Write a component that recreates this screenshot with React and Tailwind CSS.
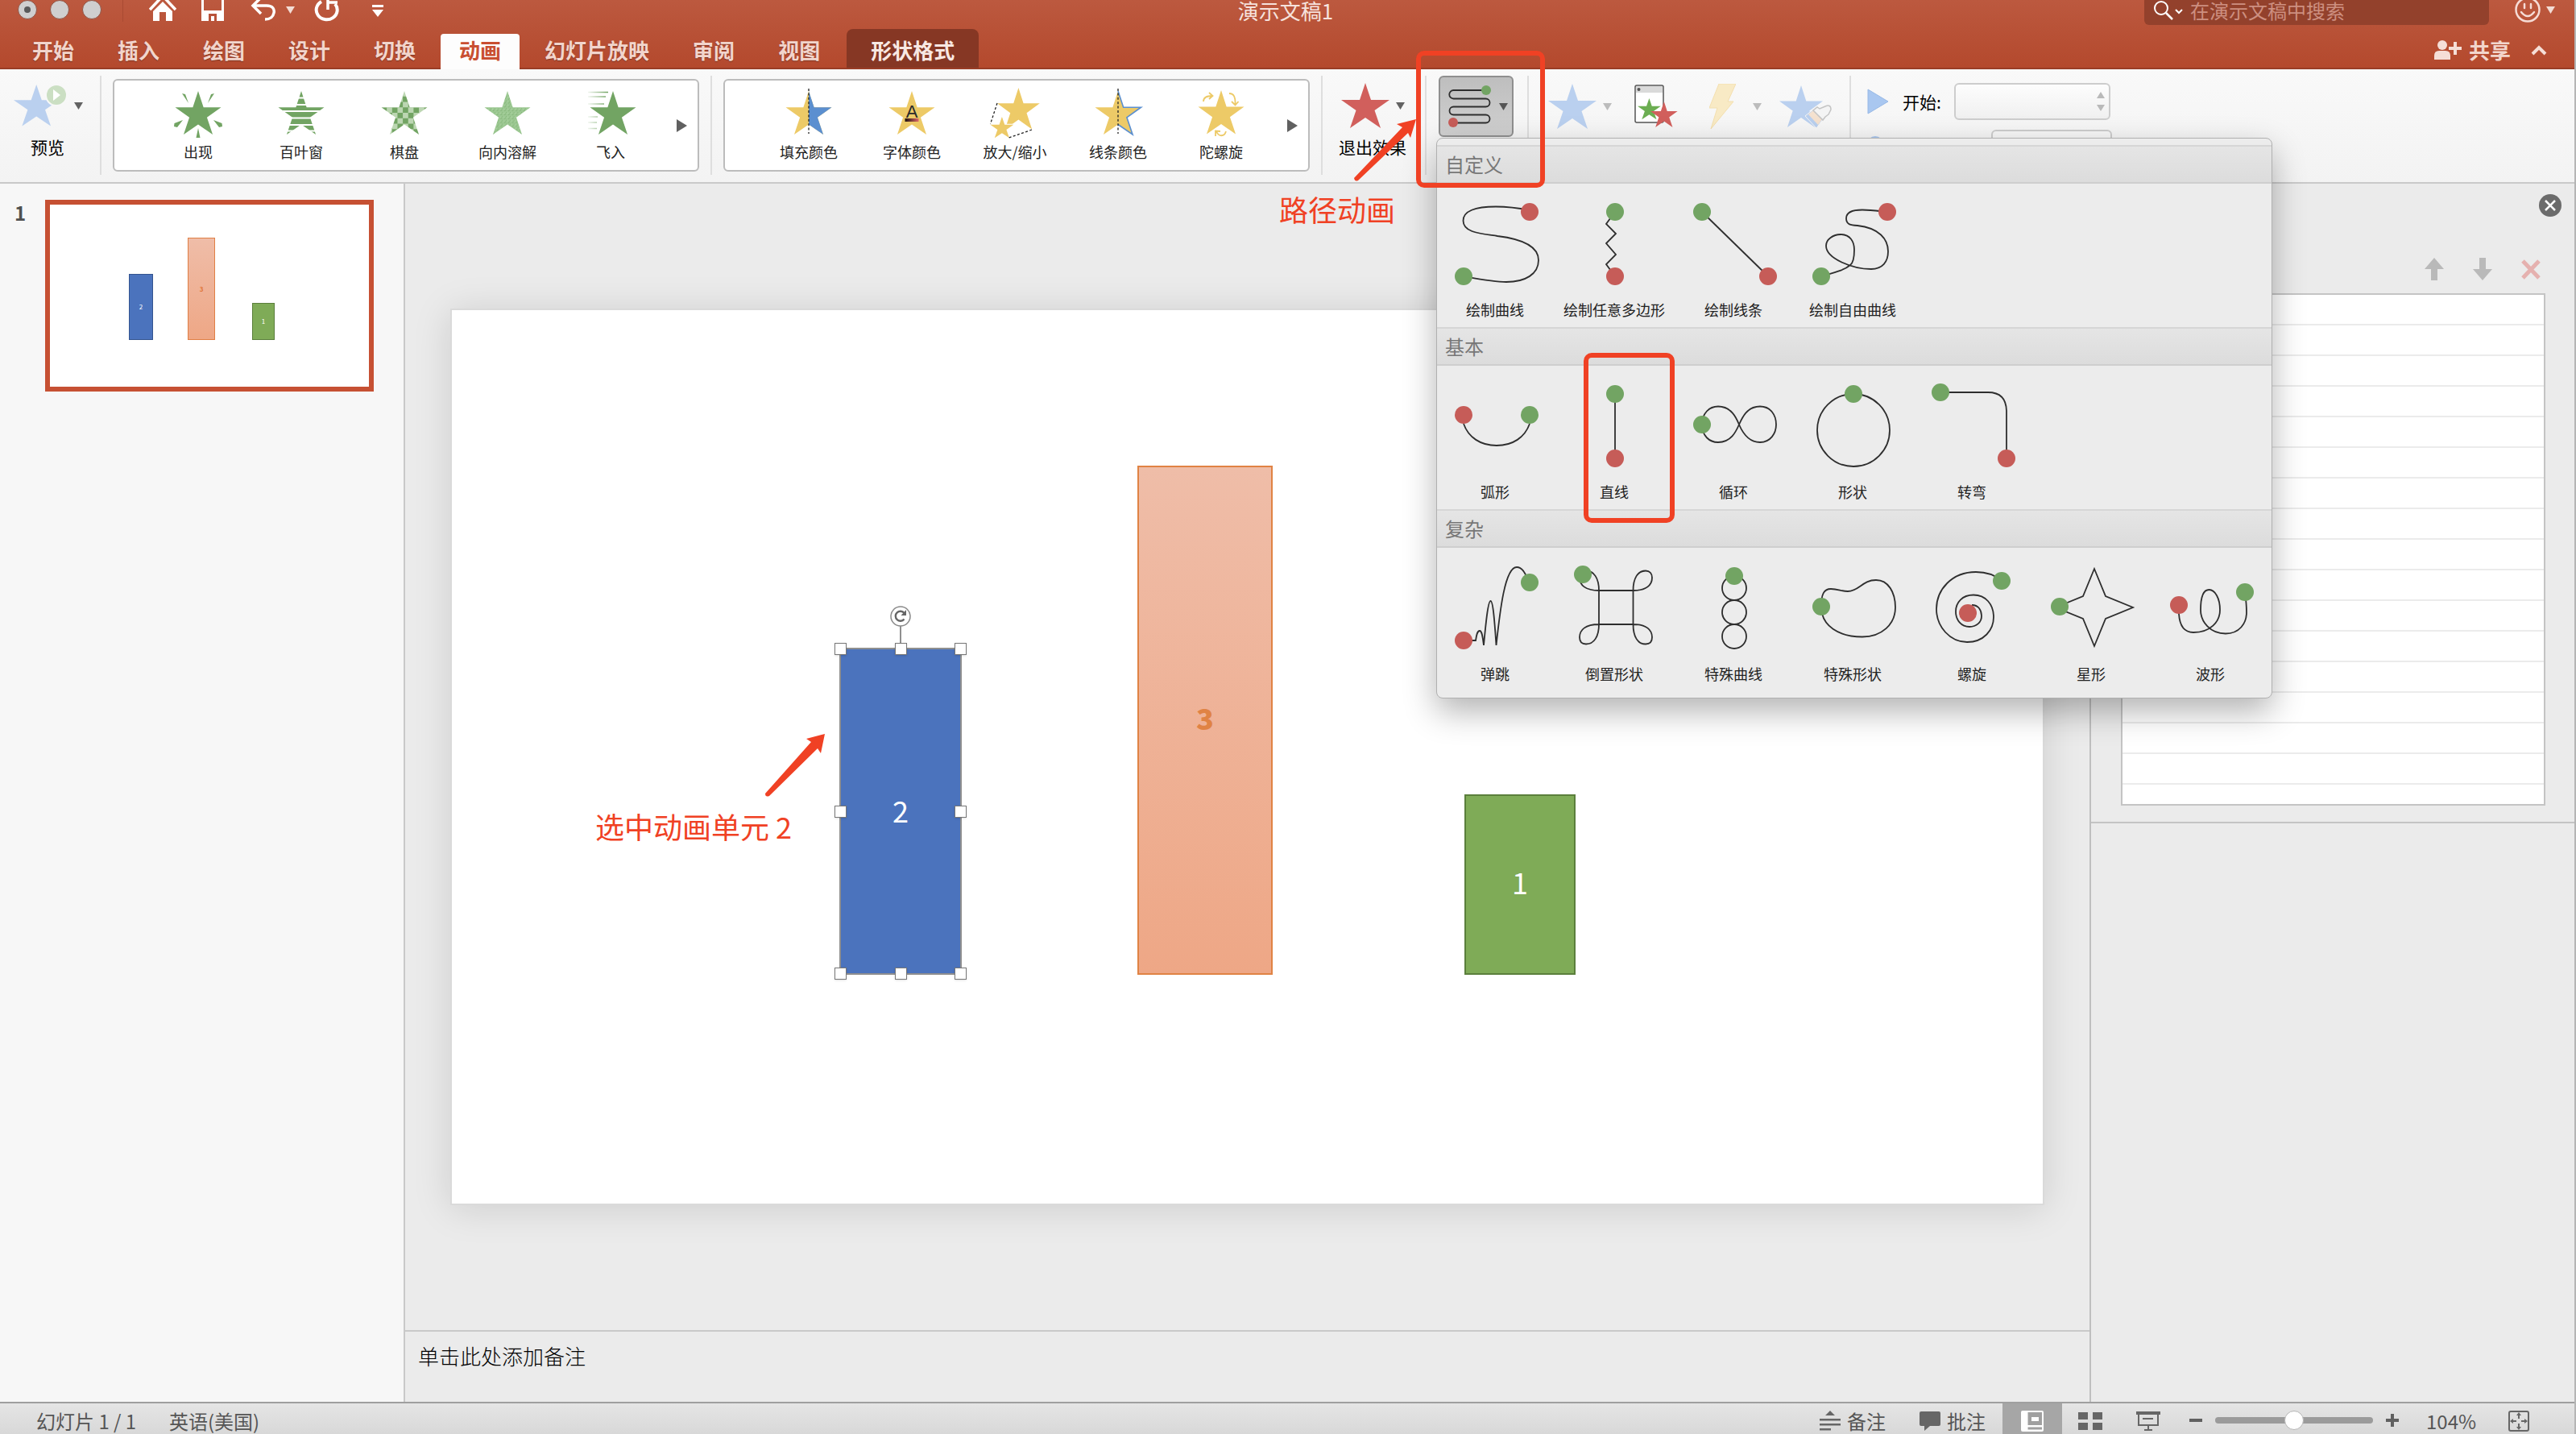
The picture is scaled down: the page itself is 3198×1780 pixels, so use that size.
import React from "react";

const STAR =
  "M30 0 37 21 60 21 41.5 34 49 56 30 43 11 56 18.5 34 0 21 23 21Z";
const GREEN = "#72a463";
const RED = "#c65c58";
const YELLOW = "#edca67";
const MARK = "#f04124";

function Caret({ className = "text-[#636363]" }) {
  return (
    <svg width="11" height="9" viewBox="0 0 11 9" className={"shrink-0 " + className} aria-hidden="true">
      <path d="M0 0H11L5.5 9Z" fill="currentColor" />
    </svg>
  );
}

function Star({ fill, width = 60, height = 56 }) {
  return (
    <svg width={width} height={height} viewBox="0 0 60 56" className="shrink-0" aria-hidden="true">
      <path d={STAR} fill={fill} />
    </svg>
  );
}

function Divider() {
  return <div className="mt-2 h-[123px] w-[2px] shrink-0 bg-[#dedede]" />;
}

/* ---------- effect gallery icons, star centred in an 84 x 70 box ---------- */

const T = "translate(13.5 9) scale(.95 .965)";

function Dashed({ d }) {
  return <path d={d} stroke="#222" strokeWidth="1.3" strokeDasharray="3 2.4" fill="none" />;
}

const effectIcons = {
  appear: (
    <>
      <path d={STAR} transform={T} fill={GREEN} />
      <path
        fill={GREEN}
        d="M22 12 26 13 30 24ZM62 12 58 13 54 24ZM12 53 12.500 49 23 45 16 54ZM72 53 71.500 49 61 45 68 54ZM42 55 39.500 67H44.500Z"
      />
    </>
  ),
  blinds: (
    <>
      <path d={STAR} transform={T} fill={GREEN} />
      <path d="M10 17.500H74M10 26H74M10 34H74M10 42.500H74M10 51H74M10 58.500H74" stroke="#fff" strokeWidth="1.800" />
    </>
  ),
  checker: (
    <>
      <defs>
        <pattern id="checks" width="14" height="14" patternUnits="userSpaceOnUse">
          <rect width="14" height="14" fill={GREEN} />
          <rect width="7" height="7" fill="#bcd6b2" />
          <rect x="7" y="7" width="7" height="7" fill="#bcd6b2" />
        </pattern>
      </defs>
      <path d={STAR} transform={T} fill="url(#checks)" />
    </>
  ),
  dissolve: (
    <>
      <defs>
        <pattern id="grain" width="5" height="5" patternUnits="userSpaceOnUse">
          <rect width="5" height="5" fill="#9cc892" />
          <rect x="1" y="0" width="1" height="1" fill="#7fb074" />
          <rect x="3" y="2" width="1" height="1" fill="#84b579" />
          <rect x="0" y="3" width="1" height="1" fill="#b3d8aa" />
          <rect x="2" y="4" width="1" height="1" fill="#7fb074" />
        </pattern>
      </defs>
      <path d={STAR} transform={T} fill="url(#grain)" />
    </>
  ),
  fly: (
    <>
      <defs>
        <linearGradient id="trail" gradientUnits="userSpaceOnUse" x1="14" y1="0" x2="38" y2="0">
          <stop offset="0" stopColor={GREEN} stopOpacity="0.1" />
          <stop offset="1" stopColor={GREEN} />
        </linearGradient>
      </defs>
      <path d={STAR} transform="translate(16.5 9) scale(.95 .965)" fill={GREEN} />
      <path d="M14 10.500H39M14 16H36M14 25H34M14 41H26M14 48H25M14 55.500H25" stroke="url(#trail)" strokeWidth="1.600" />
    </>
  ),
  fill: (
    <>
      <path d={STAR} transform={T} fill={YELLOW} />
      <path d="M30 0 37 21 60 21 41.5 34 49 56 30 43Z" transform={T} fill="#5b8fd0" />
      <Dashed d="M42 6V62" />
    </>
  ),
  font: (
    <>
      <defs>
        <linearGradient id="ink" x1="0" x2="1" y1="0" y2="0">
          <stop offset="0" stopColor="#1b1010" />
          <stop offset="1" stopColor="#e06a68" />
        </linearGradient>
      </defs>
      <path d={STAR} transform={T} fill={YELLOW} />
      <text x="42" y="42" textAnchor="middle" fontSize="22" fill="#2b2b2b" fontFamily="Liberation Sans, sans-serif">A</text>
      <rect x="33.500" y="43" width="17" height="4" fill="url(#ink)" />
    </>
  ),
  scale: (
    <>
      <path d={STAR} transform="translate(20 5) scale(.88 .92)" fill={YELLOW} />
      <path d={STAR} transform="translate(11.5 41) scale(.48 .47)" fill={YELLOW} stroke="#fff" strokeWidth="5" paintOrder="stroke" />
      <Dashed d="M20 24 11.500 50M63 57 34.500 67" />
    </>
  ),
  line: (
    <>
      <path d={STAR} transform={T} fill={YELLOW} />
      <path d="M30 0 37 21 60 21 41.5 34 49 56 30 43" transform={T} fill="none" stroke="#5b8fd0" strokeWidth="1.700" />
      <Dashed d="M42 6V62" />
    </>
  ),
  spin: (
    <>
      <path d={STAR} transform="translate(13.5 8) scale(.95 .975)" fill={YELLOW} />
      <path
        d="M20 22C20 17 24 15 31 15M27 11 31.500 15 27 19M52 12C58 12 60 17 59.500 26M55 22 59.500 26.500 63.500 22M48 59C46 66 39 66 36 59M35 65V58.500L41 59"
        stroke={YELLOW}
        strokeWidth="1.800"
        fill="none"
      />
    </>
  ),
};

function Gallery({ label, items }) {
  return (
    <div
      role="group"
      aria-label={label}
      className="mt-3 flex h-[115px] w-[728px] shrink-0 items-start rounded-md border-2 border-[#bcbcbc] bg-white pl-10"
    >
      {items.map(([icon, text]) => (
        <button key={text} type="button" className="flex h-full w-32 flex-col items-center pt-1">
          <svg width="84" height="70" viewBox="0 0 84 70" aria-hidden="true">
            {effectIcons[icon]}
          </svg>
          <span className="mt-[2px] text-[18px] leading-6 text-[#222]">{text}</span>
        </button>
      ))}
      <button type="button" aria-label="更多" className="ml-[18px] mt-12">
        <svg width="13" height="16" viewBox="0 0 13 16" aria-hidden="true">
          <path d="M0 0 13 8 0 16Z" fill="#606060" />
        </svg>
      </button>
    </div>
  );
}

const entranceEffects = [
  ["appear", "出现"],
  ["blinds", "百叶窗"],
  ["checker", "棋盘"],
  ["dissolve", "向内溶解"],
  ["fly", "飞入"],
];
const emphasisEffects = [
  ["fill", "填充颜色"],
  ["font", "字体颜色"],
  ["scale", "放大/缩小"],
  ["line", "线条颜色"],
  ["spin", "陀螺旋"],
];

/* ---------- motion path menu ---------- */

const pathGroups = [
  {
    title: "自定义",
    items: [
      { text: "绘制曲线", d: "M115 33C95 29 85 28.500 73 28.500C47 28.500 32.500 34 32.500 46C32.500 61 55 62 75 65C108 69 126 79 126 95C126 112 110 122 86 122C70 122 55 119 33 115", g: [33, 115], r: [115, 35] },
      { text: "绘制任意多边形", d: "M73 35 62 50 74 62 62 74 74 88 62 100 73 115", g: [73, 35], r: [73, 115] },
      { text: "绘制线条", d: "M33 35 115 115", g: [33, 35], r: [115, 115] },
      { text: "绘制自由曲线", d: "M115 35C105 34 95 32.500 84 32.500C70 32.500 64 36 64 43C64 51 70 51.500 78 52C105 55 116 69 116 84C116 97 109 106 95 106C72 106 39 93 39 77C39 69 48 63 57 63C69 63 74 72 74 82C74 92 73 98 69 101C62 107 54 109 33 115", g: [33, 115], r: [115, 35] },
    ],
  },
  {
    title: "基本",
    items: [
      { text: "弧形", d: "M33 72C39 89 54 99 74 99C94 99 109 89 115 72", g: [115, 61], r: [33, 61] },
      { text: "直线", d: "M73 35V115", g: [73, 35], r: [73, 115] },
      { text: "循环", d: "M33 73C33 59 42 50.500 53 50.500C70 50.500 76 66 79 73C82 80 89 95 105 95C118 95 125 84 125 73C125 61 118 50.500 105 50.500C89 50.500 83 64 79 73C75 82 69 95 53 95C42 95 33 87 33 73", g: [33, 73] },
      { text: "形状", d: "M28 80A45 45 0 1 1 118 80A45 45 0 1 1 28 80Z", g: [73, 35] },
      { text: "转弯", d: "M33 33H92Q115 33 115 57V115", g: [33, 33], r: [115, 115] },
    ],
  },
  {
    title: "复杂",
    items: [
      { text: "弹跳", d: "M33 115H48C49 108 50 103 53 103C56 103 57 113 58 121C60 100 63 66 66.500 66S72 100 73.500 121C78 80 84 24 99 24C106 24 109 31 115 43", g: [115, 43], r: [33, 115] },
      { text: "倒置形状", d: "M53 53H96C112 53 119 46 119 37C119 32 116 28.500 111 28.500C101 28.500 95.500 38 95.500 53V95C95.500 110 101 119.500 111 119.500C116 119.500 119 117 119 111C119 102 112 95 96 95H53C36 95 29 102 29 111C29 117 32 119.500 37 119.500C47 119.500 53 110 53 95V53C53 38 47 28.500 37 28.500C32 28.500 29 32 29 37C29 46 36 53 53 53", g: [33, 33] },
      { text: "特殊曲线", d: "M58 50a15 15 0 1 1 30 0a15 15 0 1 1-30 0M58 80a15 15 0 1 1 30 0a15 15 0 1 1-30 0M58 110a15 15 0 1 1 30 0a15 15 0 1 1-30 0", g: [73, 35] },
      { text: "特殊形状", d: "M33 73C33 58 36 51 45 51C54 51 58 54 66 54C80 54 84 40 101 40C116 40 125 55 125 74C125 95 108 110.500 84 110.500C55 110.500 33 97 33 73", g: [33, 73] },
      { text: "螺旋", d: "M109 41C100 33 89 30 77 30C47 30 28 52 28 76C28 98 45 117 66 117C87 117 99 102 99 86C99 70 89 58.500 74 58.500C60 58.500 52 68 52 79C52 90 59 98 69 98C78 98 84 92 84 85C84 77 80 71 72 71", g: [109, 41], r: [67, 81] },
      { text: "星形", d: "M76 26 90 60 124 74 90 88 76 122 62 88 28 74 62 60Z", g: [33, 73] },
      { text: "波形", d: "M33 71V82C34 98 40 105 51 105C72 105 84 92 84 77C84 63 78 52 70.500 52S60 63 60 77C60 92 72 106.500 91 106.500C108 106.500 117 94 117 80C117 73 116.500 66 115 55", g: [115, 55], r: [33, 71] },
    ],
  },
];

function PathMenu() {
  return (
    <div
      role="menu"
      className="absolute -left-[3px] top-[77px] z-20 w-[1038px] rounded-lg border border-[#b0b0b0] bg-[#ececec] py-2 shadow-[0_16px_40px_rgba(0,0,0,0.3)]"
    >
      {pathGroups.map((group) => (
        <section key={group.title}>
          <h2 className="flex h-12 items-center border-y-2 border-t-[#d6d6d6] border-b-[#cecece] bg-linear-to-b from-[#e5e5e5] to-[#dcdcdc] pl-[10px] text-[24px] leading-8 font-normal text-[#777]">
            {group.title}
          </h2>
          <div className="grid h-[178px] grid-cols-7">
            {group.items.map(({ text, d, g, r }) => (
              <button key={text} type="button" role="menuitem" className="flex flex-col items-center">
                <svg width="148" height="144" viewBox="0 0 148 144" className="shrink-0" aria-hidden="true">
                  <path d={d} fill="none" stroke="#2e2e2e" strokeWidth="1.800" />
                  {r && <circle cx={r[0]} cy={r[1]} r="11" fill={RED} />}
                  <circle cx={g[0]} cy={g[1]} r="11" fill={GREEN} />
                </svg>
                <span className="pr-1 text-[18px] leading-6 whitespace-nowrap text-[#222]">{text}</span>
              </button>
            ))}
          </div>
        </section>
      ))}
    </div>
  );
}

/* ---------- header ---------- */

function TitleBar() {
  return (
    <div className="grid h-[42px] grid-cols-[1fr_auto_1fr] items-start text-white">
      <div className="flex items-start">
        <div className="ml-[22px] flex gap-4">
          <span className="flex h-6 w-6 items-center justify-center rounded-full border border-[#8f5343] bg-[#cfcfcf]">
            <span className="h-2 w-2 rounded-full bg-[#5a5a5a]" />
          </span>
          <span className="h-6 w-6 rounded-full border border-[#8f5343] bg-[#cfcfcf]" />
          <span className="h-6 w-6 rounded-full border border-[#8f5343] bg-[#cfcfcf]" />
        </div>
        <span className="ml-[26px] h-[27px] w-px bg-[#a94a32]" />
        <button type="button" aria-label="主页" className="ml-8">
          <svg width="34" height="28" viewBox="0 0 34 28" aria-hidden="true">
            <path d="M1 12 17-5 33 12" fill="none" stroke="#fff" strokeWidth="3.500" />
            <path d="M5 14 17 2 29 14V26H21V15H13V26H5Z" fill="#fff" />
          </svg>
        </button>
        <button type="button" aria-label="保存" className="ml-[31px]">
          <svg width="28" height="28" viewBox="0 0 28 28" aria-hidden="true">
            <path d="M1.500-4V24.500H26.500V-4" fill="none" stroke="#fff" strokeWidth="3" />
            <path d="M2 13H26V26H2Z" fill="#fff" />
            <path d="M9 17H19V26H16V20H12V26H9Z" fill="#b9533a" />
          </svg>
        </button>
        <button type="button" aria-label="撤销" className="ml-[33px]">
          <svg width="34" height="28" viewBox="0 0 34 28" aria-hidden="true">
            <path d="M13-3 3 7 13 17M3 7H20C28 7 30 12 29 16C28 21 24 24 18 24" fill="none" stroke="#fff" strokeWidth="3.500" />
          </svg>
        </button>
        <Caret className="mt-2 ml-[10px] text-[#f3dcd5]" />
        <button type="button" aria-label="重做" className="ml-6">
          <svg width="32" height="30" viewBox="0 0 32 30" aria-hidden="true">
            <path d="M9 2A13 12 0 1 0 26 5" fill="none" stroke="#fff" strokeWidth="4" />
            <path d="M17-6V12M17 3H29" fill="none" stroke="#fff" strokeWidth="3.500" />
          </svg>
        </button>
        <button type="button" aria-label="自定义工具栏" className="ml-10 mt-[6px]">
          <svg width="14" height="16" viewBox="0 0 14 16" aria-hidden="true">
            <path d="M0 0H14V3H0ZM0 6H14L7 15Z" fill="#fff" />
          </svg>
        </button>
      </div>
      <h1 className="pr-1 text-[26px] leading-[26px] font-normal text-[#f6e2dc]">演示文稿1</h1>
      <div className="flex items-start justify-end pr-6">
        <label className="flex h-[31px] w-[428px] items-center rounded-b-md bg-[#93412c] pb-[5px] pl-3">
          <svg width="36" height="26" viewBox="0 0 36 26" className="shrink-0" aria-hidden="true">
            <circle cx="9" cy="10" r="8" fill="none" stroke="#fff" strokeWidth="2" />
            <path d="M15 16 23 24" stroke="#fff" strokeWidth="2.500" />
            <path d="M27 12 31 16 35 12" fill="none" stroke="#fff" strokeWidth="2" />
          </svg>
          <input
            aria-label="在演示文稿中搜索"
            placeholder="在演示文稿中搜索"
            className="ml-[9px] h-[26px] w-full bg-transparent text-[24px] leading-[26px] text-white placeholder:text-[#cd8f80] focus:outline-none"
          />
        </label>
        <button type="button" aria-label="反馈" className="ml-8 flex items-start">
          <svg width="32" height="30" viewBox="0 0 32 30" aria-hidden="true">
            <circle cx="16" cy="12" r="14.500" fill="none" stroke="#f6dcd6" strokeWidth="2.500" />
            <path d="M12 5V10M20 5V10M8 15Q16 25 24 15" fill="none" stroke="#f6dcd6" strokeWidth="2.500" strokeLinecap="round" />
          </svg>
          <Caret className="ml-[7px] mt-2 text-[#f3dcd5]" />
        </button>
      </div>
    </div>
  );
}

const tabs = ["开始", "插入", "绘图", "设计", "切换", "动画", "幻灯片放映", "审阅", "视图"];

function Tabs() {
  return (
    <nav className="flex h-11 items-stretch pl-[13px] text-[26px] leading-9 font-bold text-[#f2d5cc]">
      {tabs.map((t) =>
        t === "动画" ? (
          <button key={t} type="button" className="mx-1 rounded-t bg-[#fdfdfd] px-[23px] pb-1 text-[#c94f31]">
            {t}
          </button>
        ) : (
          <button key={t} type="button" className="mx-1 mb-[2px] px-[23px] pb-[2px] [text-shadow:0_1px_1px_rgba(0,0,0,0.3)]">
            {t}
          </button>
        )
      )}
      <button type="button" className="-mt-[6px] mb-[2px] ml-[6px] rounded-t-lg bg-[#863724] px-[30px] pt-1 text-[#f8e8e3]">
        形状格式
      </button>
      <div className="ml-auto flex items-center gap-[9px] pr-[34px] pb-1">
        <button type="button" className="flex items-center gap-[9px]">
          <svg width="34" height="26" viewBox="0 0 34 26" aria-hidden="true">
            <circle cx="10" cy="7" r="6" fill="#f5ded7" />
            <path d="M0 25V20Q0 14 6 14H14Q20 14 20 20V25ZM24 3H28V9H34V13H28V19H24V13H18V9H24Z" fill="#f5ded7" />
          </svg>
          共享
        </button>
        <button type="button" aria-label="折叠功能区" className="ml-4">
          <svg width="20" height="14" viewBox="0 0 20 14" aria-hidden="true">
            <path d="M2 12 10 4 18 12" fill="none" stroke="#f5ded7" strokeWidth="4" />
          </svg>
        </button>
      </div>
    </nav>
  );
}

/* ---------- ribbon ---------- */

function Ribbon() {
  return (
    <div className="relative flex h-[142px] items-start border-b-2 border-[#c9c9c9] bg-linear-to-b from-[#f9f9f9] to-[#f3f3f3]">
      <button type="button" className="flex w-[124px] shrink-0 flex-col items-start pt-[17px] pl-[17px]">
        <span className="flex items-center">
          <svg width="68" height="56" viewBox="0 0 68 56" aria-hidden="true">
            <path d={STAR} transform="translate(0 2) scale(.94 .92)" fill="#bad0ef" />
            <circle cx="53" cy="15" r="14" fill="#f8f8f8" />
            <circle cx="53" cy="15" r="12" fill="#cbdfc3" />
            <path d="M49 8V22L58 15Z" fill="#fff" />
          </svg>
          <Caret className="ml-[7px] text-[#636363]" />
        </span>
        <span className="mt-[9px] ml-[21px] text-[21px] leading-7 text-black">预览</span>
      </button>
      <Divider />
      <div className="w-[14px] shrink-0" />
      <Gallery label="进入效果" items={entranceEffects} />
      <div className="w-[14px] shrink-0" />
      <Divider />
      <div className="w-[14px] shrink-0" />
      <Gallery label="强调效果" items={emphasisEffects} />
      <div className="w-[14px] shrink-0" />
      <Divider />
      <button type="button" className="flex w-[127px] shrink-0 flex-col items-start pt-[17px] pl-[20px]">
        <span className="flex items-center gap-2 pl-[3px]">
          <Star fill="#d15f5c" />
          <Caret />
        </span>
        <span className="mt-[9px] text-[21px] leading-7 whitespace-nowrap text-black">退出效果</span>
      </button>
      <Divider />
      <div className="relative mt-2 ml-[15px] shrink-0">
        <button
          type="button"
          aria-label="路径动画"
          aria-expanded="true"
          className="flex h-[76px] w-[93px] items-center rounded-md border-2 border-[#8f8f8f] bg-linear-to-b from-[#bebebe] to-[#d0d0d0] pl-2"
        >
          <svg width="60" height="64" viewBox="0 0 60 64" aria-hidden="true">
            <path
              d="M48 12H8.500a5 5 0 0 0 0 10.500H48.500a5 5 0 0 1 0 10H8.500a5 5 0 0 0 0 10H48.500a5 5 0 0 1 0 10H8"
              fill="none"
              stroke="#2e2e2e"
              strokeWidth="1.800"
            />
            <circle cx="49" cy="12" r="6" fill={GREEN} />
            <circle cx="8" cy="52" r="6" fill={RED} />
          </svg>
          <Caret className="ml-[5px] text-[#555]" />
        </button>
        <PathMenu />
      </div>
      <div className="w-[17px] shrink-0" />
      <Divider />
      <div className="flex h-[92px] shrink-0 items-center pl-6">
        <button type="button" aria-label="效果选项" className="flex items-center gap-2">
          <Star fill="#bad0ef" />
          <Caret className="text-[#bcbcbc]" />
        </button>
        <button type="button" aria-label="动画窗格" className="ml-7">
          <svg width="54" height="54" viewBox="0 0 54 54" aria-hidden="true">
            <rect x="1" y="1" width="35" height="46" rx="2" fill="#fff" stroke="#555" strokeWidth="1.500" />
            <path d="M2 2H35V10H2Z" fill="#dadada" />
            <circle cx="5.500" cy="6" r="2" fill="#555" />
            <path d={STAR} transform="translate(4 17) scale(.48 .47)" fill="#6cae52" />
            <path d={STAR} transform="translate(20 21) scale(.56 .57)" fill="#d15f5c" />
          </svg>
        </button>
        <button type="button" aria-label="触发" className="ml-[39px] flex items-center gap-[21px]">
          <svg width="33" height="56" viewBox="0 0 33 56" aria-hidden="true">
            <path d="M12 0H33L23 22H30L2 56L10 30H0Z" fill="#f8eac5" stroke="#f3dfae" />
          </svg>
          <Caret className="text-[#bcbcbc]" />
        </button>
        <button type="button" aria-label="动画刷" className="ml-[22px]">
          <svg width="66" height="56" viewBox="0 0 66 56" aria-hidden="true">
            <path d={STAR} transform="translate(0 2) scale(.9 .93)" fill="#bad0ef" />
            <path d="M32 40 42 32 54 44 46 55Z" fill="#b9cfee" stroke="#f5f5f5" />
            <path d="M36 38 42 33 53 44 48 51Z" fill="#f4e1cf" />
            <path d="M42 33 47 29 50 31 57 28Q64 25 64 32L61 38 57 41 54 45Z" fill="#f4f4f4" stroke="#c4c4c4" strokeWidth="1.500" />
          </svg>
        </button>
      </div>
      <div className="w-[21px] shrink-0" />
      <Divider />
      <div className="ml-[20px] flex h-[140px] flex-col overflow-hidden">
        <div className="mt-[17px] flex h-[46px] items-center">
          <svg width="27" height="32" viewBox="0 0 27 32" aria-hidden="true">
            <path d="M1 1 26 16 1 31Z" fill="#a9c7f0" stroke="#98b9e6" />
          </svg>
          <label htmlFor="start" className="ml-[17px] text-[21px] leading-7 text-black">开始:</label>
          <span className="relative ml-4 flex">
            <select
              id="start"
              className="h-[46px] w-[194px] appearance-none rounded-md border-2 border-[#cdcdcd] bg-linear-to-b from-[#fdfdfd] to-[#f0f0f0]"
            />
            <svg width="10" height="26" viewBox="0 0 10 26" className="pointer-events-none absolute top-[10px] right-[7px]" aria-hidden="true">
              <path d="M0 9 5 1 10 9ZM0 17 5 25 10 17Z" fill="#b9b9b9" />
            </svg>
          </span>
        </div>
        <div className="mt-3 flex items-start">
          <svg width="20" height="20" viewBox="0 0 20 20" className="mt-[8px]" aria-hidden="true">
            <circle cx="10" cy="10" r="10" fill="#a9c7f0" />
          </svg>
          <input aria-label="持续时间" className="ml-[134px] h-9 w-[150px] rounded-md border-2 border-[#cdcdcd] bg-[#f7f7f7]" />
        </div>
      </div>
      {/* callout around the motion path button */}
      <div className="pointer-events-none absolute -top-[23px] left-[1758px] z-30 h-[170px] w-40 rounded-[10px] border-6 border-[#f04124]" />
      <svg width="80" height="80" viewBox="0 0 80 80" className="pointer-events-none absolute top-[61px] left-[1680px] z-30" aria-hidden="true">
        <path d="M78 1 54 7 61 11 1 74Q2 79 6 77L68 18 71 24Z" fill={MARK} />
      </svg>
      <p className="absolute top-[149px] left-[1588px] z-10 text-[36px] leading-12 whitespace-nowrap text-[#f04124]">路径动画</p>
    </div>
  );
}

/* ---------- workspace ---------- */

function Thumbnails() {
  return (
    <aside className="flex w-[503px] shrink-0 items-start border-r-2 border-[#c9c9c9] bg-[#f7f7f7] pt-5 pl-[18px]">
      <span className="w-[38px] text-[24px] leading-8 font-bold text-[#505050]">1</span>
      <button
        type="button"
        aria-label="幻灯片 1"
        className="relative h-[238px] w-[408px] border-6 border-[#c65033] bg-white text-[8px] leading-3"
      >
        <span className="absolute top-[86px] left-[98px] flex h-[82px] w-[30px] items-center justify-center border border-[#34548f] bg-[#4b73bd] text-white">2</span>
        <span className="absolute top-[41px] left-[171px] flex h-[127px] w-[34px] items-center justify-center border border-[#e07f45] bg-linear-to-b from-[#efbda8] to-[#eea786] font-bold text-[#e0763a]">3</span>
        <span className="absolute top-[122px] left-[251px] flex h-[46px] w-7 items-center justify-center border border-[#5b7f3c] bg-[#7fab57] text-white">1</span>
      </button>
    </aside>
  );
}

const handles = [
  "-top-2 -left-2",
  "-top-2 left-[67px]",
  "-top-2 -right-2",
  "top-[194px] -left-2",
  "top-[194px] -right-2",
  "-bottom-2 -left-2",
  "-bottom-2 left-[67px]",
  "-bottom-2 -right-2",
];

function Slide() {
  return (
    <div className="relative aspect-video w-full border-2 border-[#dadada] bg-white shadow-[0_4px_44px_rgba(0,0,0,0.13)]">
      <div className="absolute top-[419px] left-[481px] flex h-[406px] w-[152px] items-center justify-center border-2 border-[#8f8f8f] bg-[#4b73bd] pb-1 text-[36px] leading-10 text-white">
        2
        <div className="absolute -top-[30px] left-[73px] h-[30px] w-[2px] bg-[#8f8f8f]" />
        <svg width="26" height="26" viewBox="0 0 26 26" className="absolute -top-[54px] left-[61px]" aria-hidden="true">
          <circle cx="13" cy="13" r="12" fill="#fff" stroke="#8a8a8a" strokeWidth="1.500" />
          <path d="M17.500 16.500A6 6 0 1 1 17.500 9" fill="none" stroke="#666" strokeWidth="2.400" />
          <path d="M20 5V12H13.500Z" fill="#666" />
        </svg>
        {handles.map((pos) => (
          <span key={pos} className={"absolute h-[15px] w-[15px] border border-[#777] bg-white shadow " + pos} />
        ))}
      </div>
      <div className="absolute top-[193px] left-[851px] flex h-[632px] w-[168px] items-center justify-center border-2 border-[#e08344] bg-linear-to-b from-[#efbda8] to-[#eea786] pb-2 text-[36px] leading-10 font-black text-[#e08344]">
        3
      </div>
      <div className="absolute top-[601px] left-[1257px] flex h-[224px] w-[138px] items-center justify-center border-2 border-[#5b7f3c] bg-[#7fab57] pb-2 text-[36px] leading-10 text-white">
        1
      </div>
      <svg width="76" height="80" viewBox="0 0 76 80" className="absolute top-[526px] left-[388px]" aria-hidden="true">
        <path d="M75 0 52 6 58 10 1 74Q1 79 6 77L66 18 70 24Z" fill={MARK} />
      </svg>
      <p className="absolute top-[616px] left-[178px] text-[36px] leading-12 whitespace-nowrap text-[#f04124]">选中动画单元 2</p>
    </div>
  );
}

function AnimationPane() {
  return (
    <aside className="w-[602px] shrink-0 border-l-2 border-[#bfbfbf] bg-[#ebebeb]">
      <div className="flex h-[794px] flex-col border-b-2 border-[#c4c4c4] pr-9 pl-[37px]">
        <button type="button" aria-label="关闭" className="-mr-5 mt-[13px] self-end">
          <svg width="28" height="28" viewBox="0 0 28 28" aria-hidden="true">
            <circle cx="14" cy="14" r="14" fill="#6b6b6b" />
            <path d="M8 8 20 20M20 8 8 20" stroke="#fff" strokeWidth="2.500" />
          </svg>
        </button>
        <div className="mt-[51px] flex justify-end gap-9 pr-[6px]">
          <button type="button" aria-label="上移">
            <svg width="24" height="28" viewBox="0 0 24 28" aria-hidden="true">
              <path d="M12 0 24 14H16V28H8V14H0Z" fill="#b9b9b9" />
            </svg>
          </button>
          <button type="button" aria-label="下移">
            <svg width="24" height="28" viewBox="0 0 24 28" aria-hidden="true">
              <path d="M12 28 24 14H16V0H8V14H0Z" fill="#b9b9b9" />
            </svg>
          </button>
          <button type="button" aria-label="删除">
            <svg width="24" height="28" viewBox="0 0 24 28" aria-hidden="true">
              <path d="M2 4 22 25M22 4 2 25" stroke="#e5b1af" strokeWidth="5" />
            </svg>
          </button>
        </div>
        <ul className="mt-4 mb-5 flex-1 overflow-hidden border-2 border-[#c4c4c4] bg-white">
          {Array.from({ length: 17 }, (_, i) => (
            <li key={i} className="h-[38px] border-b-2 border-[#ebebeb]" />
          ))}
        </ul>
      </div>
    </aside>
  );
}

/* ---------- status bar ---------- */

function StatusBar() {
  return (
    <footer className="flex h-10 items-stretch border-t-2 border-[#9f9f9f] bg-linear-to-b from-[#e5e5e5] to-[#d8d8d8] text-[24px] leading-7 text-[#555]">
      <div className="flex items-center pt-[6px] pl-[45px]">
        <span className="w-[165px]">幻灯片 1 / 1</span>
        <button type="button">英语(美国)</button>
      </div>
      <div className="ml-auto flex items-stretch pr-[56px]">
        <button type="button" className="flex items-center gap-2 pt-[6px]">
          <svg width="26" height="26" viewBox="0 0 26 26" aria-hidden="true">
            <path d="M13 0 19 6H7ZM0 10H26V12.500H0ZM0 16H26V18.500H0ZM0 22H14V24.500H0Z" fill="#666" />
          </svg>
          备注
        </button>
        <button type="button" className="ml-[42px] flex items-center gap-2 pt-[6px]">
          <svg width="26" height="26" viewBox="0 0 26 26" aria-hidden="true">
            <path d="M2 1H24Q26 1 26 3V17Q26 19 24 19H13L6 25V19H2Q0 19 0 17V3Q0 1 2 1Z" fill="#666" />
          </svg>
          批注
        </button>
        <button type="button" aria-label="普通视图" className="ml-[21px] flex w-[74px] items-center justify-center bg-[#a6a6a6] pt-[6px]">
          <svg width="28" height="26" viewBox="0 0 28 26" aria-hidden="true">
            <rect width="28" height="26" rx="2" fill="#fff" />
            <path d="M8.500 2H26V18H8.500ZM8.500 20.500H26V23.500H8.500Z" fill="#a0a0a0" />
            <path d="M13 8H22V13H13Z" fill="#fff" />
          </svg>
        </button>
        <button type="button" aria-label="幻灯片浏览" className="ml-5 pt-[6px]">
          <svg width="30" height="22" viewBox="0 0 30 22" aria-hidden="true">
            <path d="M0 0H12V9H0ZM18 0H30V9H18ZM0 13H12V22H0ZM18 13H30V22H18Z" fill="#666" />
          </svg>
        </button>
        <button type="button" aria-label="幻灯片放映" className="ml-[42px] pt-[6px]">
          <svg width="30" height="24" viewBox="0 0 30 24" aria-hidden="true">
            <path d="M0 0H30V4H0Z" fill="#666" />
            <path d="M3 4V17H27V4M8 9H21M15 17V23M10 23H20" fill="none" stroke="#666" strokeWidth="2" />
          </svg>
        </button>
        <button type="button" aria-label="缩小" className="ml-9 pt-1">
          <svg width="16" height="16" viewBox="0 0 16 16" aria-hidden="true">
            <path d="M0 6H16V10H0Z" fill="#606060" />
          </svg>
        </button>
        <input
          type="range"
          aria-label="缩放"
          min="0"
          max="100"
          defaultValue="50"
          className="mt-[9px] ml-4 h-6 w-[196px] appearance-none bg-transparent [&::-webkit-slider-runnable-track]:h-2 [&::-webkit-slider-runnable-track]:rounded-full [&::-webkit-slider-runnable-track]:bg-[#9b9b9b] [&::-webkit-slider-thumb]:-mt-2 [&::-webkit-slider-thumb]:h-6 [&::-webkit-slider-thumb]:w-6 [&::-webkit-slider-thumb]:appearance-none [&::-webkit-slider-thumb]:rounded-full [&::-webkit-slider-thumb]:border [&::-webkit-slider-thumb]:border-[#b5b5b5] [&::-webkit-slider-thumb]:bg-white"
        />
        <button type="button" aria-label="放大" className="ml-4 pt-1">
          <svg width="16" height="16" viewBox="0 0 16 16" aria-hidden="true">
            <path d="M0 6H6V0H10V6H16V10H10V16H6V10H0Z" fill="#606060" />
          </svg>
        </button>
        <span className="ml-[34px] flex w-[68px] items-center pt-[6px]">104%</span>
        <button type="button" aria-label="适应窗口" className="ml-[34px] pt-[6px]">
          <svg width="26" height="26" viewBox="0 0 26 26" aria-hidden="true">
            <rect x="1" y="1" width="24" height="24" rx="2" fill="none" stroke="#666" strokeWidth="2" />
            <path d="M13 10V5M13 16V21M10 13H5M16 13H21" stroke="#666" strokeWidth="2" />
            <path d="M13 2 16 6H10ZM13 24 16 20H10ZM2 13 6 10V16ZM24 13 20 10V16Z" fill="#666" />
          </svg>
        </button>
      </div>
    </footer>
  );
}

export default function App() {
  return (
    <div className="flex min-h-screen flex-col border-r-2 border-[#b5b5b5] bg-[#ebebeb] font-['Noto_Sans_CJK_SC',sans-serif]">
      <header className="bg-[linear-gradient(to_bottom,#bc593f_0px,#b4492d_84px,#993d26_84px)]">
        <TitleBar />
        <Tabs />
      </header>
      <Ribbon />
      <main className="flex flex-1 items-stretch">
        <Thumbnails />
        <div className="relative flex min-w-0 flex-1 flex-col">
          <div className="flex flex-1 items-center overflow-hidden px-14">
            <Slide />
          </div>
          <div className="h-[89px] border-t-2 border-[#c9c9c9] px-4 pt-[10px]">
            <textarea
              aria-label="备注"
              defaultValue="单击此处添加备注"
              rows={1}
              className="block w-full resize-none bg-transparent text-[26px] leading-10 font-light text-black focus:outline-none"
            />
          </div>
        </div>
        <AnimationPane />
      </main>
      <StatusBar />
      {/* callout around the straight line path */}
      <div className="pointer-events-none absolute top-[438px] left-[1966px] z-30 h-[211px] w-[113px] rounded-[10px] border-6 border-[#f04124]" />
    </div>
  );
}
